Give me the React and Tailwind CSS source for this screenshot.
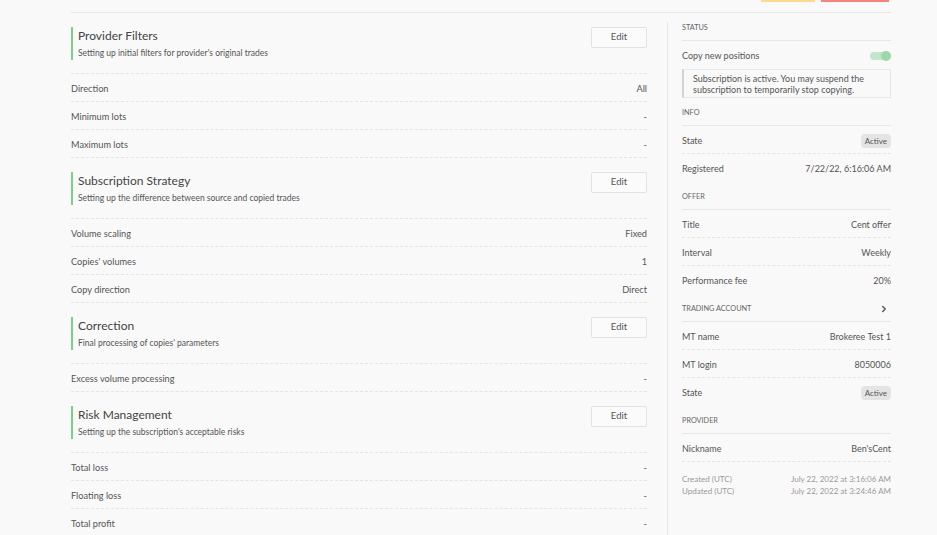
import { ChevronRight } from 'lucide-react';

const sections = [
  {
    title: 'Provider Filters',
    hint: "Setting up initial filters for provider's original trades",
    rows: [
      ['Direction', 'All'],
      ['Minimum lots', '-'],
      ['Maximum lots', '-'],
    ],
  },
  {
    title: 'Subscription Strategy',
    hint: 'Setting up the difference between source and copied trades',
    rows: [
      ['Volume scaling', 'Fixed'],
      ["Copies' volumes", '1'],
      ['Copy direction', 'Direct'],
    ],
  },
  {
    title: 'Correction',
    hint: "Final processing of copies' parameters",
    rows: [['Excess volume processing', '-']],
  },
  {
    title: 'Risk Management',
    hint: "Setting up the subscription's acceptable risks",
    rows: [
      ['Total loss', '-'],
      ['Floating loss', '-'],
      ['Total profit', '-'],
    ],
  },
];

function Section({ title, hint, rows }) {
  return (
    <div className="pt-[14px]">
      <div className="flex items-start justify-between pb-[13px] border-b border-dashed border-[#e4e4e4]">
        <div className="border-l-2 border-[#7ccf86] pl-[5px] pb-[1px]">
          <div className="text-[12px] leading-[16px] pt-[1px] text-[#444]">{title}</div>
          <div className="mt-[3px] text-[8.5px] leading-[12px] text-[#555]">{hint}</div>
        </div>
        <button className="w-[56px] h-[21px] rounded-[2px] border border-[#e2e2e2] bg-[#fbfbfb] text-[9.5px] text-[#555]">
          Edit
        </button>
      </div>
      {rows.map(([k, v]) => (
        <div
          key={k}
          className="h-[28px] pt-[3px] flex items-center justify-between border-b border-dashed border-[#e4e4e4] text-[9.2px] text-[#555]"
        >
          <span>{k}</span>
          <span>{v}</span>
        </div>
      ))}
    </div>
  );
}

function Label({ children, extra }) {
  return (
    <div className="h-[28px] pt-[3px] flex items-center justify-between border-b border-[#e6e6e6] text-[7.3px] uppercase text-[#666]">
      <span>{children}</span>
      {extra}
    </div>
  );
}

function Row({ k, children, dashed = true }) {
  return (
    <div
      className={`h-[28px] pt-[2px] flex items-center justify-between text-[9px] text-[#555] ${
        dashed ? 'border-b border-dashed border-[#e4e4e4]' : ''
      }`}
    >
      <span>{k}</span>
      <span>{children}</span>
    </div>
  );
}

const Badge = ({ children }) => (
  <span className="inline-flex items-center h-[14px] px-[4px] -mt-[1px] rounded-[4px] bg-[#e4e4e4] text-[8px] text-[#555]">
    {children}
  </span>
);

export default function App() {
  return (
    <div
      className="min-h-[535px] bg-[#f9f9f9] overflow-hidden"
      style={{ fontFamily: 'Lato, "Open Sans", sans-serif' }}
    >
      <div className="ml-[71px] w-[820px]">
        {/* page toolbar, scrolled mostly out of view */}
        <div className="h-[13px] border-b border-[#e6e6e6] flex justify-end items-start pr-[2px] gap-[6px]">
          <div className="w-[54px] h-[2px] bg-[#fdd98c]" />
          <div className="w-[68px] h-[2px] bg-[#f4837a]" />
        </div>

        <div className="flex">
          <div className="w-[576px] shrink-0">
            {sections.map((s) => (
              <Section key={s.title} {...s} />
            ))}
          </div>

          <div className="ml-[20px] mt-[9px] border-l border-[#e6e6e6] pl-[14px] w-[224px] shrink-0 min-h-[520px]">
            <div className="-mt-[9px]">
              <Label>Status</Label>
              <div className="h-[28px] pt-[2px] flex items-center justify-between text-[9px] text-[#555]">
                <span>Copy new positions</span>
                <span className="relative w-[21px] h-[10px] flex items-center">
                  <span className="w-full h-[8px] rounded-full bg-[#c3e6ca]" />
                  <span className="absolute right-0 w-[10px] h-[10px] rounded-full bg-[#9ed8a9]" />
                </span>
              </div>
              <div className="h-[29px] flex flex-col justify-center border border-[#e6e6e6] border-l-2 border-l-[#d2d2d2] pl-[9px] text-[9px] leading-[11px] text-[#555]">
                <div>Subscription is active. You may suspend the</div>
                <div>subscription to temporarily stop copying.</div>
              </div>

              <Label>Info</Label>
              <Row k="State">
                <Badge>Active</Badge>
              </Row>
              <Row k="Registered" dashed={false}>7/22/22, 6:16:06 AM</Row>

              <Label>Offer</Label>
              <Row k="Title">Cent offer</Row>
              <Row k="Interval">Weekly</Row>
              <Row k="Performance fee" dashed={false}>20%</Row>

              <Label
                extra={<ChevronRight size={10} strokeWidth={3.5} className="text-[#555] mr-[2px]" />}
              >
                Trading account
              </Label>
              <Row k="MT name">Brokeree Test 1</Row>
              <Row k="MT login">8050006</Row>
              <Row k="State" dashed={false}>
                <Badge>Active</Badge>
              </Row>

              <Label>Provider</Label>
              <Row k="Nickname">Ben'sCent</Row>

              <div className="pt-[11px] text-[8px] leading-[12px] text-[#999]">
                <div className="flex justify-between">
                  <span>Created (UTC)</span>
                  <span>July 22, 2022 at 3:16:06 AM</span>
                </div>
                <div className="flex justify-between">
                  <span>Updated (UTC)</span>
                  <span>July 22, 2022 at 3:24:46 AM</span>
                </div>
              </div>
            </div>
          </div>
        </div>
      </div>
    </div>
  );
}
